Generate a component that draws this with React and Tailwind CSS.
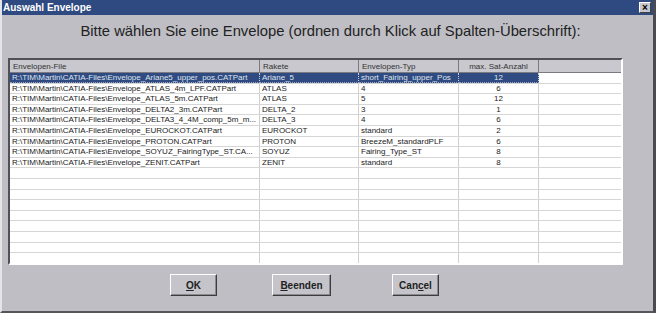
import React from 'react';

const ROWS = [
  ['R:\\TIM\\Martin\\CATIA-Files\\Envelope_Ariane5_upper_pos.CATPart', 'Ariane_5', 'short_Fairing_upper_Pos', '12'],
  ['R:\\TIM\\Martin\\CATIA-Files\\Envelope_ATLAS_4m_LPF.CATPart', 'ATLAS', '4', '6'],
  ['R:\\TIM\\Martin\\CATIA-Files\\Envelope_ATLAS_5m.CATPart', 'ATLAS', '5', '12'],
  ['R:\\TIM\\Martin\\CATIA-Files\\Envelope_DELTA2_3m.CATPart', 'DELTA_2', '3', '1'],
  ['R:\\TIM\\Martin\\CATIA-Files\\Envelope_DELTA3_4_4M_comp_5m_m...', 'DELTA_3', '4', '6'],
  ['R:\\TIM\\Martin\\CATIA-Files\\Envelope_EUROCKOT.CATPart', 'EUROCKOT', 'standard', '2'],
  ['R:\\TIM\\Martin\\CATIA-Files\\Envelope_PROTON.CATPart', 'PROTON', 'BreezeM_standardPLF', '6'],
  ['R:\\TIM\\Martin\\CATIA-Files\\Envelope_SOYUZ_FairingType_ST.CA...', 'SOYUZ', 'Fairing_Type_ST', '8'],
  ['R:\\TIM\\Martin\\CATIA-Files\\Envelope_ZENIT.CATPart', 'ZENIT', 'standard', '8'],
];

const EMPTY = Array.from({ length: 10 }, () => ['', '', '', '']);

// Spaltenbreiten in px
const COLS = 'grid-cols-[250px_99px_100px_80px_1fr]';

function Button({ children, w }) {
  return (
    <button
      className={`h-[22px] ${w} bg-[#c4c4ca] border border-t-white border-l-white border-r-[#3c3c3c] border-b-[#3c3c3c] shadow-[inset_-1px_-1px_0_#8a8a90] text-[10px] font-bold text-[#222] flex items-center justify-center`}
    >
      {children}
    </button>
  );
}

export default function App() {
  return (
    <div
      className="w-[656px] h-[313px] bg-[#bebec4] flex flex-col border-l-2 border-l-[#e4e4e8] border-r-[3px] border-r-[#4a4a50] border-b-2 border-b-[#55555a] overflow-hidden"
      style={{ fontFamily: '"Liberation Sans", Arial, sans-serif' }}
    >
      {/* Titelleiste */}
      <div className="h-[15px] bg-[#2e4a80] flex items-center justify-between pl-[1px] pr-[2px] shrink-0">
        <span className="text-white text-[10px] font-bold leading-none">Auswahl Envelope</span>
        <div className="w-[12px] h-[11px] bg-[#c8c8cc] border border-t-white border-l-white border-r-[#404040] border-b-[#404040] flex items-center justify-center text-[10px] font-bold leading-none text-black">
          ×
        </div>
      </div>

      <div className="h-[33px] flex items-center justify-center pl-[6px] shrink-0">
        <span className="text-[14.8px] text-[#222]">
          Bitte wählen Sie eine Envelope (ordnen durch Klick auf Spalten-Überschrift):
        </span>
      </div>

      {/* Tabelle */}
      <div className="ml-[6px] w-[615px] h-[207px] mt-[10px] border-2 border-t-[#505056] border-l-[#505056] border-r-white border-b-white bg-white overflow-hidden shrink-0 text-[8px] text-[#222]">
        <div className={`grid ${COLS} h-[13px] bg-[#c8c8ce] border-b border-[#7a7a80] text-[#333]`}>
          <div className="pl-[3px] border-r border-[#7a7a80] leading-[13px]">Envelopen-File</div>
          <div className="pl-[3px] border-r border-[#7a7a80] leading-[13px]">Rakete</div>
          <div className="pl-[3px] border-r border-[#7a7a80] leading-[13px]">Envelopen-Typ</div>
          <div className="text-center border-r border-[#7a7a80] leading-[13px]">max. Sat-Anzahl</div>
          <div></div>
        </div>
        {[...ROWS, ...EMPTY].map((r, i) => {
          const sel = i === 0;
          return (
            <div key={i} className={`grid ${COLS} h-[10.6px] border-b border-[#d6d6d6]`}>
              {r.map((c, j) => (
                <div
                  key={j}
                  className={`leading-[10px] whitespace-nowrap overflow-hidden border-r border-[#cfcfcf] ${
                    j === 3 ? 'text-center' : 'pl-[2px]'
                  } ${sel ? 'bg-[#2f4b82] text-[#dfe4ee] border-b border-dotted border-b-[#9aa6c0]' : ''}`}
                >
                  {c}
                </div>
              ))}
              <div></div>
            </div>
          );
        })}
      </div>

      {/* Buttons */}
      <div className="flex mt-[9px] pl-[168px] shrink-0">
        <Button w="w-[47px]">
          <span><u>O</u>K</span>
        </Button>
        <div className="w-[55px]"></div>
        <Button w="w-[59px]">
          <span><u>B</u>eenden</span>
        </Button>
        <div className="w-[61px]"></div>
        <Button w="w-[47px]">
          <span>Can<u>c</u>el</span>
        </Button>
      </div>
    </div>
  );
}
